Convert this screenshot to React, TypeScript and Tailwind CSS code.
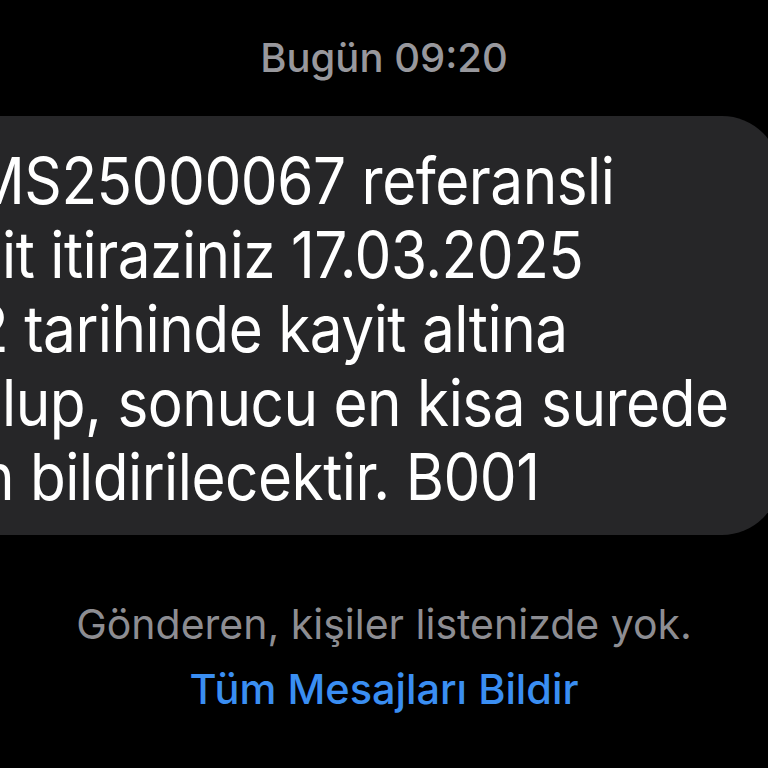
export default function App() {
  const font = { fontFamily: 'Inter, "Noto Sans", sans-serif' };
  return (
    <div className="w-[768px] h-[768px] bg-black overflow-hidden flex flex-col" style={font}>
      <div className="h-[116px] flex items-start justify-center pt-[35px]">
        <span className="text-[40px] leading-[46px] font-medium text-[#98989d]">Bugün 09:20</span>
      </div>
      <div className="flex">
        <div className="ml-[-80px] w-[860px] shrink-0 bg-[#262628] rounded-[58px] pt-[28px] pb-[21px] text-white text-[58.5px] leading-[74px] tracking-[-0.5px]">
          <div className="whitespace-nowrap ml-[52px] scale-y-[1.1]">MS25000067 referansli</div>
          <div className="whitespace-nowrap ml-[82px] scale-y-[1.1]">it itiraziniz 17.03.2025</div>
          <div className="whitespace-nowrap ml-[53px] scale-y-[1.1]">2 tarihinde kayit altina</div>
          <div className="whitespace-nowrap ml-[82px] scale-y-[1.1]">lup, sonucu en kisa surede</div>
          <div className="whitespace-nowrap ml-[60px] scale-y-[1.1]">n bildirilecektir. B001</div>
        </div>
      </div>
      <div className="flex flex-col items-center pt-[66px]">
        <span className="text-[41px] leading-[46px] text-[#8d8d92]">Gönderen, kişiler listenizde yok.</span>
        <span className="mt-[19px] text-[41.5px] leading-[46px] font-medium text-[#3a8ef2]">Tüm Mesajları Bildir</span>
      </div>
    </div>
  );
}
